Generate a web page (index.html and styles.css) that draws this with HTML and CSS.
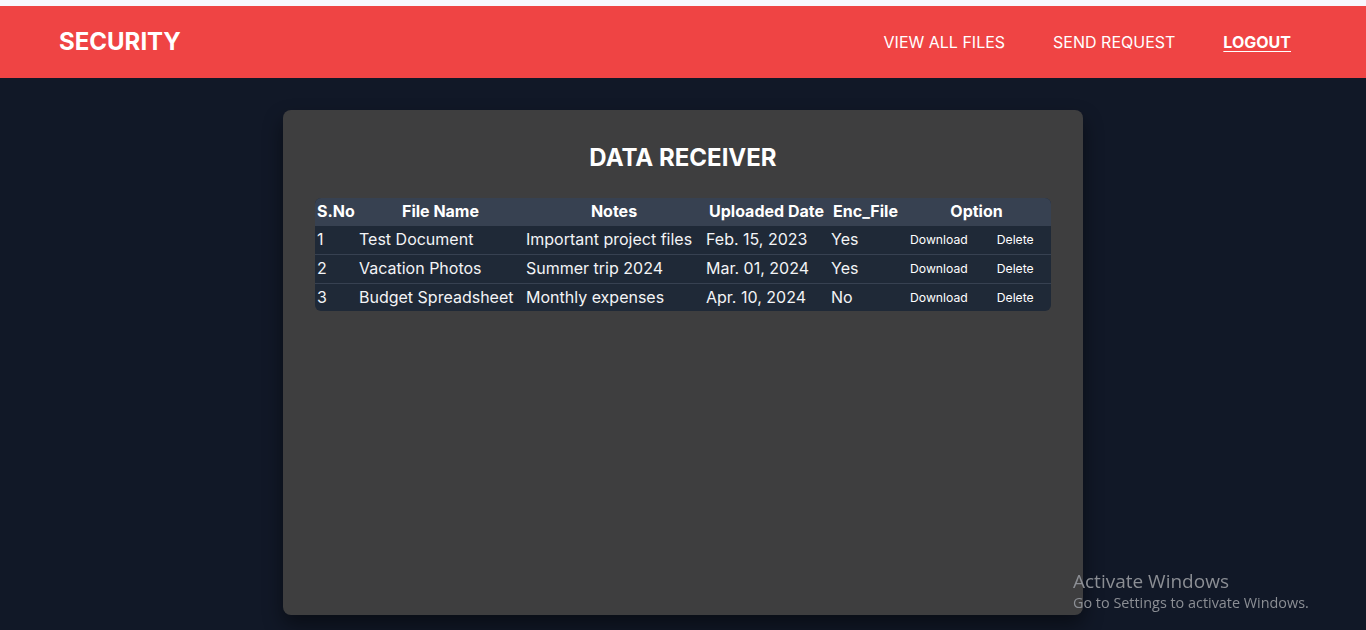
FILE: index.html
```html
<!DOCTYPE html>
<html lang="en">
<head>
<meta charset="utf-8">
<title>Data Receiver</title>
<link rel="stylesheet" href="styles.css">
</head>
<body>
<div class="topstrip"></div>
<header class="navbar">
  <div class="brand">SECURITY</div>
  <nav class="nav">
    <a href="#" class="nav-link">VIEW ALL FILES</a>
    <a href="#" class="nav-link">SEND REQUEST</a>
    <a href="#" class="nav-link nav-logout">LOGOUT</a>
  </nav>
</header>
<main class="main">
  <section class="card">
    <h1 class="card-title">DATA RECEIVER</h1>
    <div class="table-wrap">
      <table class="files">
        <colgroup>
          <col class="c1"><col class="c2"><col class="c3"><col class="c4"><col class="c5"><col class="c6">
        </colgroup>
        <thead>
          <tr><th>S.No</th><th>File Name</th><th>Notes</th><th>Uploaded Date</th><th>Enc_File</th><th>Option</th></tr>
        </thead>
        <tbody>
          <tr><td>1</td><td>Test Document</td><td>Important project files</td><td>Feb. 15, 2023</td><td>Yes</td><td class="opts"><a href="#" class="opt dl">Download</a><a href="#" class="opt del">Delete</a></td></tr>
          <tr><td>2</td><td>Vacation Photos</td><td>Summer trip 2024</td><td>Mar. 01, 2024</td><td>Yes</td><td class="opts"><a href="#" class="opt dl">Download</a><a href="#" class="opt del">Delete</a></td></tr>
          <tr class="last"><td>3</td><td>Budget Spreadsheet</td><td>Monthly expenses</td><td>Apr. 10, 2024</td><td>No</td><td class="opts"><a href="#" class="opt dl">Download</a><a href="#" class="opt del">Delete</a></td></tr>
        </tbody>
      </table>
    </div>
  </section>
</main>
<div class="watermark">
  <div class="wm-title">Activate Windows</div>
  <div class="wm-sub">Go to Settings to activate Windows.</div>
</div>
</body>
</html>
```
FILE: styles.css
```css
* { box-sizing: border-box; }
html, body { margin: 0; padding: 0; }
body {
  background: #111827;
  font-family: Inter, "Noto Sans", sans-serif;
  color: #fff;
  height: 630px;
  overflow: hidden;
}
.topstrip { height: 6px; background: #f8f7fd; }
.navbar {
  height: 72px;
  background: #ef4444;
  display: flex;
  align-items: center;
  justify-content: space-between;
  padding: 0 75px 0 59px;
}
.brand { font-size: 24px; font-weight: 700; line-height: 32px; letter-spacing: 0; }
.nav { display: flex; gap: 48px; }
.nav-link { color: #fff; text-decoration: none; font-size: 16px; line-height: 24px; }
.nav-logout { font-weight: 700; text-decoration: underline; text-underline-offset: 3px; }
.main { display: flex; justify-content: center; padding-top: 32px; }
.card {
  width: 800px;
  height: 505px;
  background: #3e3e3f;
  border-radius: 8px;
  padding: 32px;
  box-shadow: 0 10px 20px rgba(0,0,0,0.45);
}
.card-title {
  margin: 0 0 24px;
  text-align: center;
  font-size: 24px;
  line-height: 32px;
  font-weight: 700;
}
.table-wrap { border-radius: 6px; overflow: hidden; background: #1f2937; }
.files { width: 736px; border-collapse: collapse; table-layout: fixed; font-size: 16px; }
.c1 { width: 42px; } .c2 { width: 167px; } .c3 { width: 180px; }
.c4 { width: 125px; } .c5 { width: 73px; } .c6 { width: 149px; }
.files th {
  background: #374151;
  height: 27px;
  padding: 0 2px;
  font-weight: 700;
  text-align: center;
  line-height: 24px;
  white-space: nowrap;
}
.files th:first-child { text-align: left; }
.files td {
  height: 29px;
  padding: 0 1px 2px 2px;
  line-height: 24px;
  color: #f3f4f6;
  border-top: 1px solid #374151;
  white-space: nowrap;
}
.files tr.last td { height: 27px; padding-bottom: 1px; }
.files td.opts { padding-left: 8px; }
.opt { color: #fff; text-decoration: none; font-size: 12.2px; }
.del { margin-left: 29px; }
.watermark {
  position: fixed;
  left: 1073px;
  top: 570px;
  font-family: "Open Sans", "Noto Sans", sans-serif;
  color: #8b8e94;
  pointer-events: none;
}
.wm-title { font-size: 19px; line-height: 22px; }
.wm-sub { font-size: 14.4px; line-height: 20px; margin-top: 1px; }
```
